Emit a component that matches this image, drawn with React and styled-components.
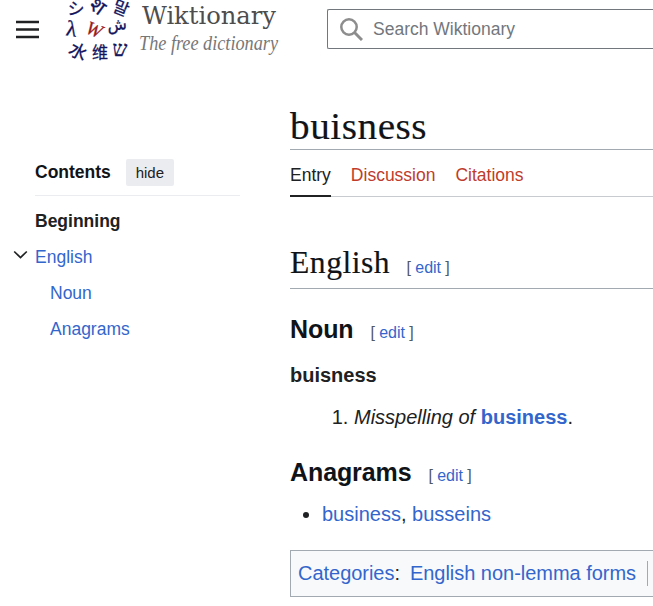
import React from 'react';
import styled, { createGlobalStyle } from 'styled-components';

const GlobalStyle = createGlobalStyle`
    body {
        margin: 0;
        background: #fff;
        color: #202122;
        font-family: Arial, "Liberation Sans", sans-serif;
        overflow: hidden;
    }

    * {
        box-sizing: border-box;
    }
`;

const Page = styled.div`
    width: 100%;
    height: 606px;
    overflow: hidden;
`;

const Header = styled.header`
    display: flex;
    align-items: flex-start;
    height: 104px;
`;

const MenuButton = styled.button`
    display: flex;
    align-items: center;
    width: 65px;
    height: 60px;
    padding: 0 0 0 16px;
    border: none;
    background: none;
`;

const Logo = styled.a`
    display: block;
    width: 262px;
    height: 64px;

    svg {
        display: block;
        overflow: visible;
    }
`;

const SearchBox = styled.div`
    display: flex;
    align-items: center;
    flex: 1;
    height: 40px;
    margin-top: 9px;
    padding-left: 12px;
    gap: 10px;
    border: 1px solid #72777d;
    border-right: none;
    border-radius: 2px 0 0 2px;
    color: #72777d;
    font-size: 17.5px;
`;

const Layout = styled.div`
    display: flex;
`;

const Sidebar = styled.nav`
    width: 240px;
    margin-right: 50px;
    padding-top: 55px;
    flex-shrink: 0;
    font-size: 17.5px;
`;

const ContentsHeader = styled.div`
    display: flex;
    align-items: center;
    height: 37px;
    margin-left: 35px;
    padding-bottom: 9px;
    border-bottom: 1px solid #eaecf0;
    color: #101418;
    font-weight: bold;
`;

const HideButton = styled.button`
    width: 48px;
    height: 27px;
    margin-left: 15px;
    padding: 0;
    border: none;
    border-radius: 2px;
    background: #eaecf0;
    color: #202122;
    font-family: inherit;
    font-size: 15px;
`;

const ContentsList = styled.div`
    padding-top: 7px;
`;

const ContentsItem = styled.div`
    display: flex;
    align-items: center;
    height: 36px;
    padding-left: ${({ $level }) => ($level === 2 ? 50 : $level === 1 ? 13 : 35)}px;
    gap: 7px;
    color: ${({ $active }) => ($active ? '#202122' : '#3366cc')};
    font-weight: ${({ $active }) => ($active ? 'bold' : 'normal')};

    svg {
        margin-bottom: 4px;
    }
`;

const Main = styled.main`
    flex: 1;
    min-width: 0;
    font-size: 20px;
`;

const SerifText = styled.span`
    display: inline-block;
    transform: scaleX(${({ $stretch }) => $stretch});
    transform-origin: left;
    letter-spacing: 0.5px;
    -webkit-text-stroke: 0.15px #101418;
`;

const PageTitle = styled.h1`
    height: 46px;
    margin: 0;
    border-bottom: 1px solid #a2a9b1;
    color: #101418;
    font-family: Georgia, "Liberation Serif", serif;
    font-size: 37px;
    font-weight: normal;
    line-height: 45px;
`;

const Tabs = styled.div`
    display: flex;
    gap: 20px;
    height: 47px;
    border-bottom: 1px solid #c8ccd1;
    font-size: 17.5px;
`;

const Tab = styled.a`
    height: 47px;
    padding-top: 15px;
    line-height: 20px;
    color: ${({ $active }) => ($active ? '#202122' : '#bf3c2c')};
    border-bottom: ${({ $active }) => ($active ? '2px solid #202122' : 'none')};
`;

const SectionHeading = styled.div`
    display: flex;
    align-items: baseline;
    height: 53px;
    margin-top: 39px;
    border-bottom: 1px solid #a2a9b1;
`;

const SectionTitle = styled.h2`
    width: 116.5px;
    margin: 0;
    color: #101418;
    font-family: Georgia, "Liberation Serif", serif;
    font-size: 31px;
    font-weight: normal;
    line-height: 54px;
`;

const SubHeading = styled.div`
    display: flex;
    align-items: baseline;
    height: 40px;
    margin-top: ${({ $top }) => $top}px;
    gap: 17px;
`;

const SubTitle = styled.h3`
    margin: 0;
    color: #101418;
    font-size: 25px;
    line-height: 40px;
    letter-spacing: -0.1px;
`;

const EditSection = styled.span`
    color: #54595d;
    font-size: 16px;
    letter-spacing: -0.05px;
    white-space: pre;
`;

const Link = styled.a`
    color: #3366cc;
    font-weight: ${({ $bold }) => ($bold ? 'bold' : 'normal')};
`;

const Headword = styled.p`
    margin: 11px 0 0;
    font-weight: bold;
    line-height: 30px;
`;

const Definitions = styled.ol`
    margin: 12px 0 0;
    padding-left: 64px;
    line-height: 30px;
`;

const AnagramList = styled.ul`
    margin: 7px 0 0;
    padding-left: 32px;
    line-height: 30px;
`;

const Categories = styled.div`
    display: flex;
    align-items: center;
    height: 47px;
    margin-top: 21px;
    padding-left: 7px;
    border: 1px solid #a2a9b1;
    border-right: none;
    background: #f8f9fa;
    letter-spacing: -0.03px;
    white-space: nowrap;
`;

const CategoryItem = styled.span`
    height: 25px;
    margin-left: 10px;
    padding-right: 11px;
    border-right: 1px solid #a2a9b1;
    line-height: 25px;
`;

const LOGO_GLYPHS = [
    { char: 'シ', x: 76, y: 15, size: 17, rotate: 5 },
    { char: 'श', x: 97, y: 13, size: 21, rotate: 36 },
    { char: '말', x: 121, y: 14, size: 17, rotate: 22 },
    { char: 'λ', x: 71.5, y: 36, size: 22, rotate: 8 },
    { char: 'W', x: 94, y: 36, size: 19, rotate: 22, italic: true },
    { char: 'ش', x: 117, y: 30, size: 16, rotate: -5 },
    { char: '水', x: 78, y: 58, size: 18, rotate: 28 },
    { char: '维', x: 100, y: 58, size: 16, rotate: 0 },
    { char: 'ש', x: 120, y: 56, size: 21, rotate: 0 },
];

const WiktionaryLogo = () => (
    <svg width="225" height="64" viewBox="65 0 225 64">
        {LOGO_GLYPHS.map(({ char, x, y, size, rotate, italic }) => {
            const color = char === 'W' ? '#9b1c1c' : '#15155c';
            return (
                <text
                    key={char}
                    x={x}
                    y={y}
                    fontSize={size}
                    fontStyle={italic ? 'italic' : 'normal'}
                    fontFamily='"Liberation Serif", "Noto Sans CJK SC", "Noto Sans", "DejaVu Sans", serif'
                    fill={color}
                    stroke={color}
                    strokeWidth="0.3"
                    textAnchor="middle"
                    transform={`rotate(${rotate} ${x} ${y - 6})`}
                >
                    {char}
                </text>
            );
        })}
        <text x="142" y="24" fontSize="24" fontFamily='"DejaVu Serif Condensed", "DejaVu Serif", serif' fill="#4d4d4d" textLength="134" lengthAdjust="spacingAndGlyphs">Wiktionary</text>
        <text x="139" y="50" fontSize="21.5" fontStyle="italic" fontFamily='"Liberation Serif", serif' fill="#777" textLength="139" lengthAdjust="spacingAndGlyphs">The free dictionary</text>
    </svg>
);

const Edit = () => (
    <EditSection>[ <Link>edit</Link> ]</EditSection>
);

const App = () => {
    return (
        <Page>
            <GlobalStyle />
            <Header>
                <MenuButton aria-label="Main menu">
                    <svg width="24" height="20" viewBox="0 0 24 20" fill="#202122">
                        <path d="M0 .8h23v2.5H0zM0 8.3h23v2.4H0zM0 15.8h23v2.5H0z" />
                    </svg>
                </MenuButton>
                <Logo><WiktionaryLogo /></Logo>
                <SearchBox>
                    <svg width="23" height="23" viewBox="0 0 23 23" fill="none" stroke="#8d8d8d" strokeWidth="2.5">
                        <circle cx="9" cy="9" r="7.7" />
                        <path d="M14.5 14.5l7.5 7.5" strokeWidth="3" />
                    </svg>
                    <span>Search Wiktionary</span>
                </SearchBox>
            </Header>
            <Layout>
                <Sidebar>
                    <ContentsHeader>
                        Contents
                        <HideButton>hide</HideButton>
                    </ContentsHeader>
                    <ContentsList>
                        <ContentsItem $active>Beginning</ContentsItem>
                        <ContentsItem $level={1}>
                            <svg width="15" height="10" viewBox="0 0 15 10" fill="none" stroke="#202122" strokeWidth="1.7">
                                <path d="M1.2 1.5L7.5 7.5l6.3-6" />
                            </svg>
                            English
                        </ContentsItem>
                        <ContentsItem $level={2}>Noun</ContentsItem>
                        <ContentsItem $level={2}>Anagrams</ContentsItem>
                    </ContentsList>
                </Sidebar>
                <Main>
                    <PageTitle>
                        <SerifText $stretch={1.06}>buisness</SerifText>
                    </PageTitle>
                    <Tabs>
                        <Tab $active>Entry</Tab>
                        <Tab>Discussion</Tab>
                        <Tab>Citations</Tab>
                    </Tabs>
                    <SectionHeading>
                        <SectionTitle>
                            <SerifText $stretch={1.02}>English</SerifText>
                        </SectionTitle>
                        <Edit />
                    </SectionHeading>
                    <SubHeading $top={20}>
                        <SubTitle>Noun</SubTitle>
                        <Edit />
                    </SubHeading>
                    <Headword>buisness</Headword>
                    <Definitions>
                        <li><i>Misspelling of</i> <Link $bold>business</Link>.</li>
                    </Definitions>
                    <SubHeading $top={20}>
                        <SubTitle>Anagrams</SubTitle>
                        <Edit />
                    </SubHeading>
                    <AnagramList>
                        <li><Link>business</Link>, <Link>busseins</Link></li>
                    </AnagramList>
                    <Categories>
                        <Link>Categories</Link>:
                        <CategoryItem><Link>English non-lemma forms</Link></CategoryItem>
                    </Categories>
                </Main>
            </Layout>
        </Page>
    );
};

export default App;
